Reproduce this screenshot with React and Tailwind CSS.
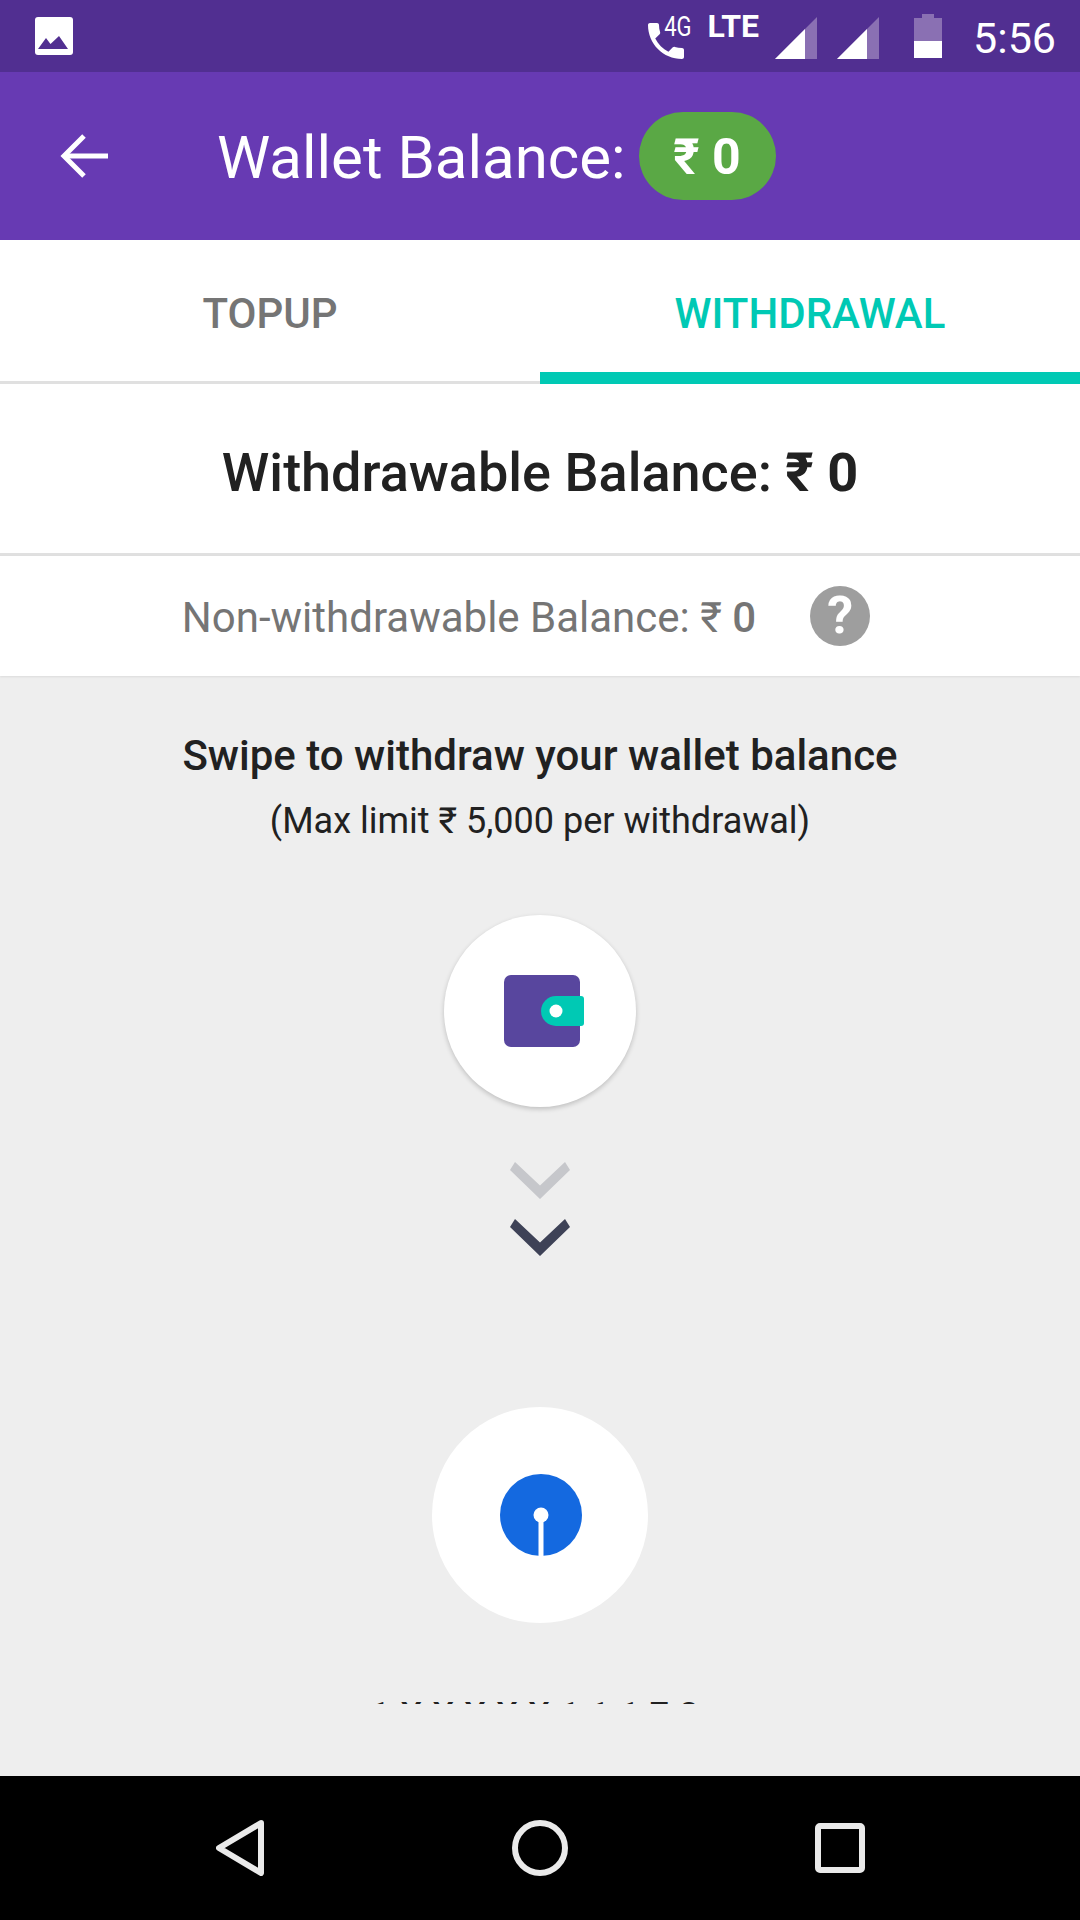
const FONT = "font-['Roboto',sans-serif]";

function SignalIcon({ className }) {
  return (
    <svg className={className} width="44" height="44" viewBox="0 0 44 44">
      <path d="M0 43 L42 1 L42 43 Z" fill="#8a70b3" />
      <path d="M0 43 L30 13 L30 43 Z" fill="#fff" />
    </svg>
  );
}

function StatusBar() {
  return (
    <div className="h-[72px] bg-[#512f91] flex items-center text-white">
      <svg className="ml-[35px]" width="38" height="38" viewBox="0 0 38 38">
        <rect x="0" y="0" width="38" height="38" rx="3" fill="#fff" />
        <path d="M3 32 L11 21 L15.5 27 L24 19 L33 32 Z" fill="#512f91" />
      </svg>
      <div className="ml-auto flex items-start mr-[24px] h-[72px]">
        <svg className="mt-[23px]" width="36" height="36" viewBox="3 3 18 18" fill="#fff">
          <path d="M6.62 10.79c1.44 2.83 3.76 5.14 6.59 6.59l2.2-2.2c.27-.27.67-.36 1.02-.24 1.12.37 2.33.57 3.57.57.55 0 1 .45 1 1V20c0 .55-.45 1-1 1-9.39 0-17-7.61-17-17 0-.55.45-1 1-1h3.5c.55 0 1 .45 1 1 0 1.25.2 2.45.57 3.57.11.35.03.74-.25 1.02l-2.2 2.2z" />
        </svg>
        <span className={`mt-[16px] -ml-[20px] text-[22px] leading-[22px] scale-y-[1.28] ${FONT}`}>4G</span>
        <span className={`mt-[13px] ml-[16px] text-[32px] leading-[26px] font-bold ${FONT}`}>LTE</span>
        <SignalIcon className="mt-[16px] ml-[16px]" />
        <SignalIcon className="mt-[16px] ml-[18px]" />
        <svg className="mt-[14px] ml-[33px]" width="28" height="44" viewBox="0 0 28 44">
          <path d="M8 0 H20 V4 H28 V27 H0 V4 H8 Z" fill="#8a70b3" />
          <rect x="0" y="27" width="28" height="17" fill="#fff" />
        </svg>
        <span className={`mt-[18px] ml-[31px] text-[43px] leading-[40px] ${FONT}`}>5:56</span>
      </div>
    </div>
  );
}

function Header() {
  return (
    <div className="h-[168px] bg-[#673ab3] flex items-center text-white">
      <svg className="ml-[60px]" width="49" height="44" viewBox="0 0 49 44" fill="none" stroke="#fff" strokeWidth="5">
        <path d="M24 2 L4 22 L24 42" />
        <path d="M4 22 H48" />
      </svg>
      <span className={`ml-[108px] pt-[4px] text-[60px] leading-[70px] ${FONT}`}>Wallet Balance:</span>
      <div className="ml-[13px] w-[137px] h-[88px] rounded-[44px] bg-[#5aa845] flex items-center justify-center">
        <span className={`text-[50px] leading-[50px] font-bold pt-[2px] ${FONT}`}>₹ 0</span>
      </div>
    </div>
  );
}

function Tabs() {
  return (
    <div className="flex h-[144px] bg-white border-b-[3px] border-[#e0e0e0]">
      <div className="flex-1 flex items-center justify-center pt-[6px]">
        <span className={`text-[42px] font-medium text-[#757575] ${FONT}`}>TOPUP</span>
      </div>
      <div className="flex-1 flex items-center justify-center border-b-[12px] border-[#00c9b4] -mb-[3px] pt-[15px]">
        <span className={`text-[42px] font-medium text-[#00c9b4] ${FONT}`}>WITHDRAWAL</span>
      </div>
    </div>
  );
}

function WalletIcon() {
  return (
    <svg className="ml-[8px]" width="80" height="72" viewBox="0 0 80 72">
      <rect x="0" y="0" width="76" height="72" rx="7" fill="#58469e" />
      <path d="M52 21 H77 Q80 21 80 24 V48 Q80 51 77 51 H52 A15 15 0 0 1 52 21 Z" fill="#00c9b4" />
      <circle cx="52" cy="36" r="6.5" fill="#fff" />
    </svg>
  );
}

function SbiIcon() {
  return (
    <svg className="ml-[2px]" width="82" height="82" viewBox="0 0 82 82">
      <circle cx="41" cy="41" r="41" fill="#1469e0" />
      <rect x="38.5" y="46" width="5" height="36" fill="#fff" />
      <circle cx="41" cy="41" r="7.5" fill="#fff" />
    </svg>
  );
}

function Chevron({ color }) {
  return (
    <svg width="60" height="37" viewBox="0 0 60 37">
      <path d="M5 0 L30 23.5 L55 0 L60 8 L30 37 L0 8 Z" fill={color} />
    </svg>
  );
}

function NavBar() {
  return (
    <div className="h-[144px] bg-black flex items-center justify-between pl-[216px] pr-[215px]">
      <svg width="50" height="56" viewBox="0 0 50 56" fill="none" stroke="#eaeaea" strokeWidth="6" strokeLinejoin="round">
        <path d="M45 3 L3 28 L45 53 Z" />
      </svg>
      <svg className="-ml-[2px]" width="56" height="56" viewBox="0 0 56 56" fill="none" stroke="#eaeaea" strokeWidth="6">
        <circle cx="28" cy="28" r="25" />
      </svg>
      <svg width="50" height="50" viewBox="0 0 50 50" fill="none" stroke="#eaeaea" strokeWidth="6">
        <rect x="3" y="3" width="44" height="44" rx="2" />
      </svg>
    </div>
  );
}

export default function App() {
  return (
    <div className="w-[1080px] h-[1920px] flex flex-col overflow-hidden bg-[#eeeeee]">
      <StatusBar />
      <Header />
      <Tabs />
      <div className="h-[172px] pt-[8px] bg-white flex items-center justify-center border-b-[3px] border-[#e0e0e0]">
        <span className={`text-[54px] font-medium text-[#212121] ${FONT}`}>
          Withdrawable Balance: <span className="font-bold">₹ 0</span>
        </span>
      </div>
      <div className="h-[120px] pt-[3px] pr-[28px] bg-white flex items-center justify-center shadow-[0_1px_2px_rgba(0,0,0,0.08)]">
        <span className={`text-[42px] text-[#757575] ${FONT}`}>
          Non-withdrawable Balance: ₹ <span className="font-medium">0</span>
        </span>
        <div className={`ml-[54px] -mt-[3px] w-[60px] h-[60px] rounded-full bg-[#9e9e9e] text-white flex items-center justify-center text-[52px] font-bold ${FONT}`}>?</div>
      </div>
      <div className="flex-1 flex flex-col items-center">
        <div className={`mt-[52px] text-[42px] leading-[56px] font-medium text-[#212121] ${FONT}`}>Swipe to withdraw your wallet balance</div>
        <div className={`mt-[13px] text-[36px] leading-[48px] text-[#212121] ${FONT}`}>(Max limit ₹ 5,000 per withdrawal)</div>
        <div className="mt-[70px] w-[192px] h-[192px] rounded-full bg-white shadow-[0_2px_5px_rgba(0,0,0,0.2)] flex items-center justify-center">
          <WalletIcon />
        </div>
        <div className="mt-[55px] flex flex-col items-center gap-[20px]">
          <Chevron color="#c6c7cb" />
          <Chevron color="#3e4257" />
        </div>
        <div className="mt-[151px] w-[216px] h-[216px] rounded-full bg-white flex items-center justify-center">
          <SbiIcon />
        </div>
        <div className="mt-[78px] h-[3px] overflow-hidden">
          <span className={`block text-[34px] leading-[34px] tracking-[10.5px] font-medium whitespace-nowrap text-[#212121] -mt-[4px] ${FONT}`}>1XXXXX11173</span>
        </div>
      </div>
      <NavBar />
    </div>
  );
}
